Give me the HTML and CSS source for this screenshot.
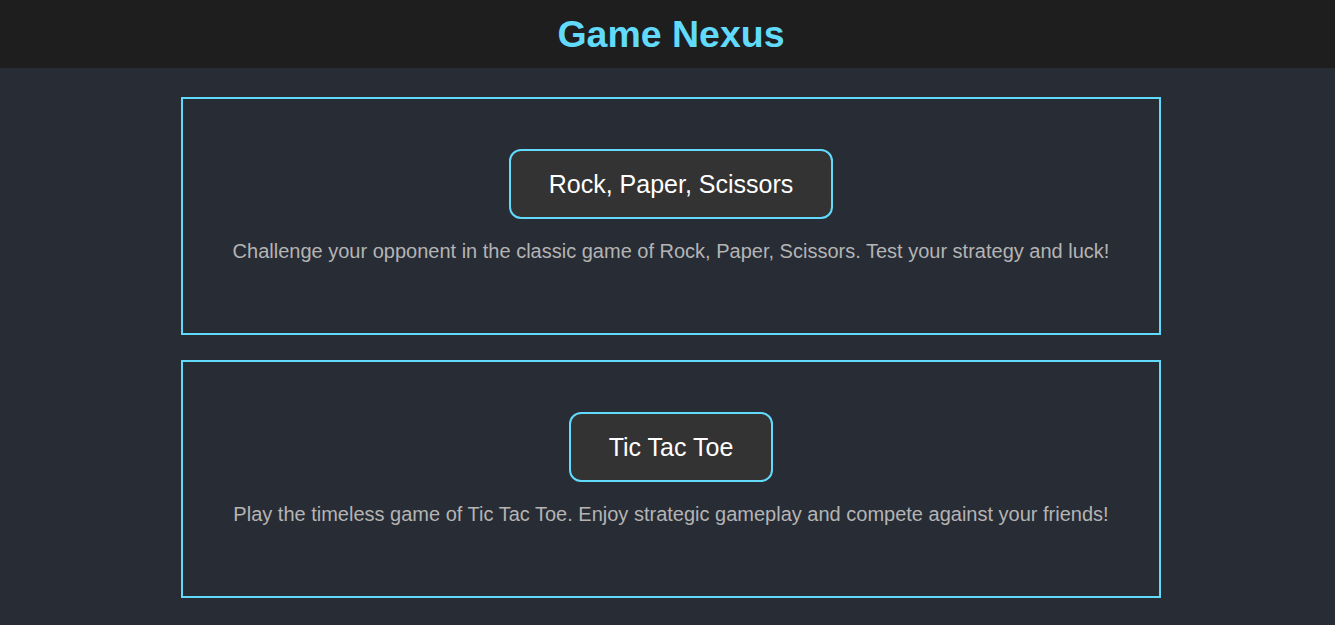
FILE: index.html
```html
<!DOCTYPE html>
<html lang="en">
<head>
<meta charset="utf-8">
<title>Game Nexus</title>
<link rel="stylesheet" href="styles.css">
</head>
<body>
<div class="app">
  <header class="site-header">
    <h1 class="site-title">Game Nexus</h1>
  </header>
  <main class="games">
    <section class="game-card">
      <button class="game-button">Rock, Paper, Scissors</button>
      <p class="game-desc">Challenge your opponent in the classic game of Rock, Paper, Scissors. Test your strategy and luck!</p>
    </section>
    <section class="game-card">
      <button class="game-button">Tic Tac Toe</button>
      <p class="game-desc">Play the timeless game of Tic Tac Toe. Enjoy strategic gameplay and compete against your friends!</p>
    </section>
  </main>
</div>
</body>
</html>
```
FILE: styles.css
```css
html, body {
  margin: 0;
  padding: 0;
  background: #282c34;
  font-family: "Liberation Sans", Arial, sans-serif;
}
.app {
  padding-left: 7px;
  min-height: 625px;
  box-sizing: border-box;
}
.site-header {
  background: #1e1e1e;
  height: 68px;
  padding-top: 13px;
  box-sizing: border-box;
  margin-left: -7px;
  padding-left: 7px;
  text-align: center;
}
.site-title {
  margin: 0;
  font-size: 37.5px;
  font-weight: bold;
  color: #61dafb;
}
.games {
  display: flex;
  flex-direction: column;
  align-items: center;
  gap: 25px;
  padding-top: 29px;
}
.game-card {
  width: 980px;
  height: 238px;
  box-sizing: border-box;
  border: 2px solid #61dafb;
  padding-top: 50px;
  display: flex;
  flex-direction: column;
  align-items: center;
}
.game-button {
  background: #333333;
  color: #ffffff;
  border: 2px solid #61dafb;
  border-radius: 12px;
  font-family: "Liberation Sans", Arial, sans-serif;
  font-size: 25px;
  padding: 0 38px;
  height: 70px;
  cursor: pointer;
}
.game-desc {
  margin: 21px 0 0;
  color: #b4b4b4;
  font-size: 20px;
  text-align: center;
}
```
